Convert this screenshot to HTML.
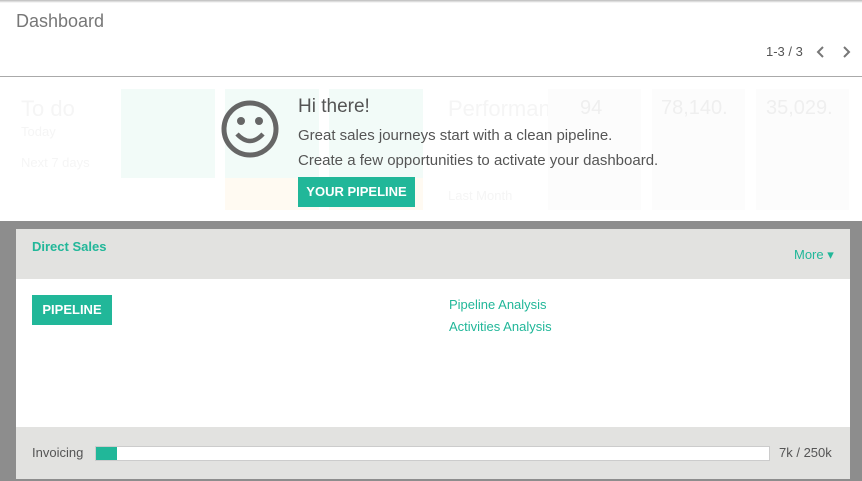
<!DOCTYPE html>
<html><head><style>
*{margin:0;padding:0;box-sizing:border-box}
body{width:862px;height:481px;overflow:hidden;background:#fff;font-family:"Liberation Sans",Arial,sans-serif;position:relative}
.a{position:absolute}
.f{color:#f5f5f5}
</style></head><body>
<div class="a" style="left:0;top:0;width:862px;height:3px;background:linear-gradient(#bbb,#fff)"></div>
<div class="a" style="left:16px;top:11px;font-size:18px;color:#777">Dashboard</div>
<div class="a" style="left:766px;top:44px;font-size:13px;color:#555">1-3 / 3</div>
<svg class="a" style="left:815px;top:45px" width="40" height="14"><path d="M8 2 L3 7 L8 12" stroke="#777" stroke-width="2" fill="none"/><path d="M29 2 L34 7 L29 12" stroke="#777" stroke-width="2" fill="none"/></svg>
<div class="a" style="left:0;top:76px;width:862px;height:1px;background:#aaa"></div>

<div class="a f" style="left:21px;top:96px;font-size:22px">To do</div>
<div class="a f" style="left:21px;top:124px;font-size:13px">Today</div>
<div class="a f" style="left:21px;top:155px;font-size:13px">Next 7 days</div>
<div class="a" style="left:121px;top:89px;width:94px;height:89px;background:#f2fbf8"></div>
<div class="a" style="left:225px;top:89px;width:94px;height:89px;background:#f2fbf8"></div>
<div class="a" style="left:329px;top:89px;width:94px;height:89px;background:#f2fbf8"></div>
<div class="a" style="left:225px;top:178px;width:94px;height:32px;background:#fffaf2"></div>
<div class="a" style="left:329px;top:178px;width:94px;height:32px;background:#fffaf2"></div>
<div class="a f" style="left:448px;top:96px;font-size:22px">Performance</div>
<div class="a f" style="left:448px;top:188px;font-size:13px">Last Month</div>
<div class="a" style="left:548px;top:89px;width:93px;height:121px;background:#fcfcfc"></div>
<div class="a" style="left:652px;top:89px;width:93px;height:121px;background:#fcfcfc"></div>
<div class="a" style="left:756px;top:89px;width:93px;height:121px;background:#fcfcfc"></div>
<div class="a" style="left:580px;top:97px;font-size:20px;color:#efefef">94</div>
<div class="a" style="left:661px;top:97px;font-size:20px;color:#efefef">78,140.</div>
<div class="a" style="left:766px;top:97px;font-size:20px;color:#efefef">35,029.</div>

<svg class="a" style="left:220px;top:99px" width="60" height="60"><circle cx="30" cy="30" r="26" stroke="#666" stroke-width="5" fill="none"/><circle cx="21" cy="22" r="4" fill="#666"/><circle cx="39" cy="22" r="4" fill="#666"/><path d="M17 35 Q30 49 43 35" stroke="#666" stroke-width="4.5" fill="none"/></svg>
<div class="a" style="left:298px;top:96px;font-size:19px;color:#555">Hi there!</div>
<div class="a" style="left:298px;top:127px;font-size:15px;color:#555">Great sales journeys start with a clean pipeline.</div>
<div class="a" style="left:298px;top:152px;font-size:15px;color:#555">Create a few opportunities to activate your dashboard.</div>
<div class="a" style="left:298px;top:177px;width:117px;height:30px;background:#21b799;color:#fff;font-size:13px;font-weight:bold;line-height:30px;text-align:center">YOUR PIPELINE</div>

<div class="a" style="left:0;top:221px;width:862px;height:260px;background:#8d8d8d"></div>
<div class="a" style="left:16px;top:229px;width:834px;height:50px;background:#e2e2e0"></div>
<div class="a" style="left:32px;top:239px;font-size:13px;font-weight:bold;color:#21b799">Direct Sales</div>
<div class="a" style="left:794px;top:247px;font-size:13px;color:#21b799">More ▾</div>
<div class="a" style="left:16px;top:279px;width:834px;height:148px;background:#fff"></div>
<div class="a" style="left:32px;top:295px;width:80px;height:30px;background:#21b799;color:#fff;font-size:13px;font-weight:bold;line-height:30px;text-align:center">PIPELINE</div>
<div class="a" style="left:449px;top:297px;font-size:13px;color:#21b799">Pipeline Analysis</div>
<div class="a" style="left:449px;top:319px;font-size:13px;color:#21b799">Activities Analysis</div>
<div class="a" style="left:16px;top:427px;width:834px;height:52px;background:#e2e2e0"></div>
<div class="a" style="left:32px;top:445px;font-size:13px;color:#555">Invoicing</div>
<div class="a" style="left:95px;top:446px;width:675px;height:15px;background:#fff;border:1px solid #ccc"></div>
<div class="a" style="left:96px;top:447px;width:21px;height:13px;background:#21b799"></div>
<div class="a" style="left:779px;top:445px;font-size:13px;color:#555">7k / 250k</div>
</body></html>
